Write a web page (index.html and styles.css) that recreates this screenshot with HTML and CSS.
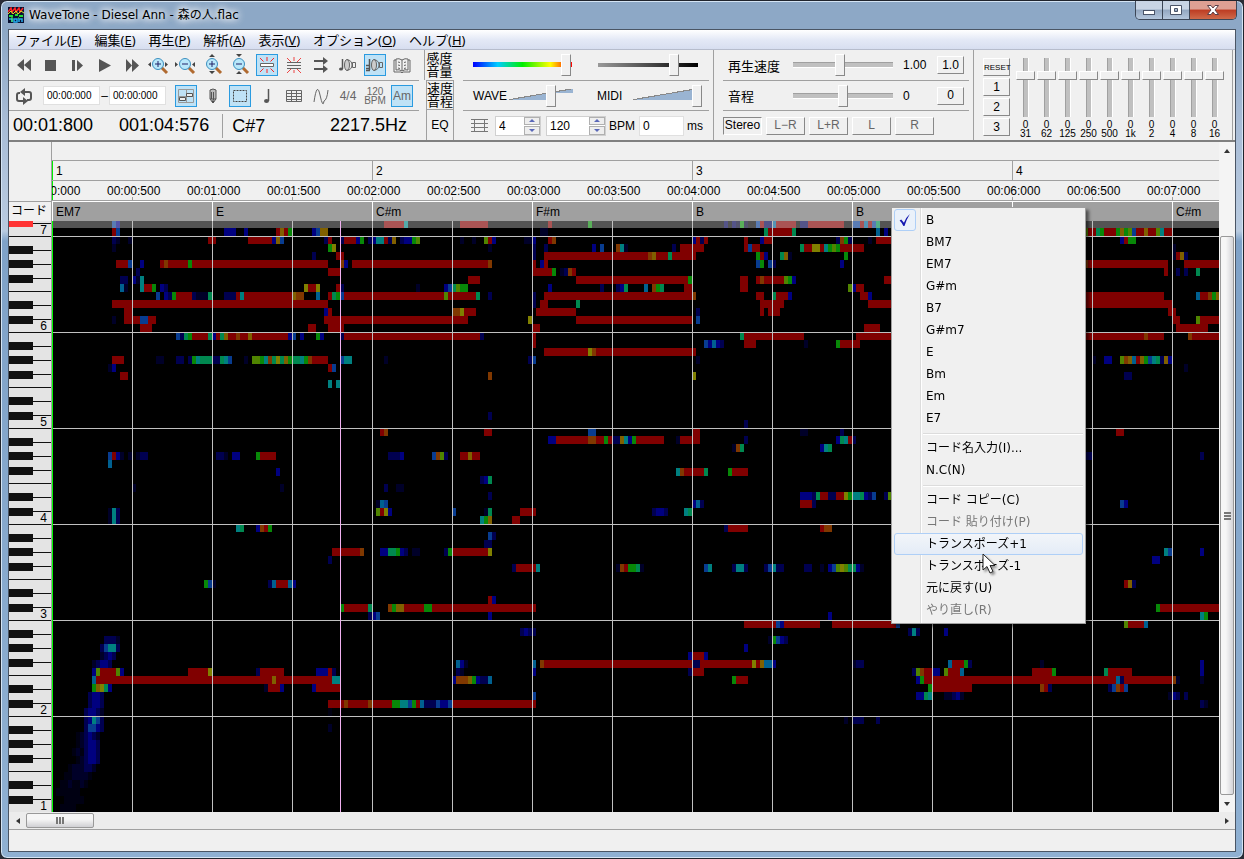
FILE: index.html
```html
<!DOCTYPE html>
<html lang="ja">
<head>
  <meta charset="UTF-8">
  <meta name="viewport" content="width=device-width, initial-scale=1.0">
  <title>WaveTone - Diesel Ann - 森の人.flac</title>
  <link rel="stylesheet" href="styles.css">
</head>
<body>

<div class="window">

  <!-- Title bar -->
  <header class="titlebar">
    <svg class="app-icon" width="16" height="16" viewBox="0 0 16 16">
      <rect width="16" height="16" fill="#081030"/>
      <path d="M0 5l3-4 1 4 3-4 1 4 3-4 1 4 3-4" stroke="#f22" fill="none" stroke-width="1.5"/>
      <path d="M0 7l3-3 2 3 3-3 2 3 3-3 3 2" stroke="#dd2" fill="none"/>
      <path d="M1 9h4M7 8h3M11 9h4" stroke="#2d3" stroke-width="2"/>
      <path d="M1 12h3v3M6 12h3v3H6zM11 15v-3h3v3" stroke="#2ae" fill="none" stroke-width="1.5"/>
      <path d="M4 10v5M10 11h1" stroke="#5f4"/>
    </svg>
    <h1>WaveTone - Diesel Ann - 森の人.flac</h1>
    <div class="caption-buttons">
      <button class="cap" aria-label="最小化"><svg width="14" height="12" viewBox="0 0 14 12"><rect x="1.500" y="6.500" width="11" height="4" fill="#fff" stroke="#4a5468"/></svg></button>
      <button class="cap" aria-label="最大化"><svg width="14" height="12" viewBox="0 0 14 12"><path d="M1.500 1.500h11v9h-11zM5.500 4.500v3h3v-3z" fill="#fff" fill-rule="evenodd" stroke="#4a5468"/></svg></button>
      <button class="cap close" aria-label="閉じる"><svg width="14" height="12" viewBox="0 0 14 12"><path d="M1.500 1.500h3.500l2 2.500 2-2.500h3.500L9 6l3.500 4.500H9L7 8l-2 2.500H1.500L5 6z" fill="#fff" stroke="#5a4048"/></svg></button>
    </div>
  </header>

  <div class="client">

    <nav class="menubar">
      <a href="#">ファイル(<u>F</u>)</a>
      <a href="#">編集(<u>E</u>)</a>
      <a href="#">再生(<u>P</u>)</a>
      <a href="#">解析(<u>A</u>)</a>
      <a href="#">表示(<u>V</u>)</a>
      <a href="#">オプション(<u>O</u>)</a>
      <a href="#">ヘルプ(<u>H</u>)</a>
    </nav>

    <!-- Toolbar -->
    <div class="toolbar">
      <div class="transport">
        <div class="row icons">
          <button class="tool" aria-label="先頭へ"><svg viewBox="0 0 22 22"><path d="M11 5v12L4 11zM18 5v12l-7-6z" fill="#555"/></svg></button>
          <button class="tool" aria-label="停止"><svg viewBox="0 0 22 22"><path d="M5 6h11v11H5z" fill="#555"/></svg></button>
          <button class="tool" aria-label="一時停止"><svg viewBox="0 0 22 22"><path d="M5 6h3v11H5zM10 6l6 5.500-6 5.500z" fill="#555"/></svg></button>
          <button class="tool" aria-label="再生"><svg viewBox="0 0 22 22"><path d="M5 5l12 6.500L5 18z" fill="#555"/></svg></button>
          <button class="tool" aria-label="末尾へ"><svg viewBox="0 0 22 22"><path d="M5 5l6 6.500L5 18zM11 5l7 6.500-7 6.500z" fill="#555"/></svg></button>
          <button class="tool" aria-label="横に拡大"><svg viewBox="0 0 22 22"><path d="M13 13l6 6" stroke="#b06a30" stroke-width="3"/><circle cx="10" cy="10" r="5.500" fill="#b8e8fa" stroke="#3b8fc0"/><path d="M7 10h6M10 7v6" stroke="#226"/><path d="M3 8v5L0 10.500zM17 8v5l3-2.500z" fill="#444"/></svg></button>
          <button class="tool" aria-label="横に縮小"><svg viewBox="0 0 22 22"><path d="M13 13l6 6" stroke="#b06a30" stroke-width="3"/><circle cx="10" cy="10" r="5.500" fill="#b8e8fa" stroke="#3b8fc0"/><path d="M7 10h6" stroke="#226"/><path d="M0 8v5l3-2.500zM20 8v5l-3-2.500z" fill="#444"/></svg></button>
          <button class="tool" aria-label="縦に拡大"><svg viewBox="0 0 22 22"><path d="M13 13l6 6" stroke="#b06a30" stroke-width="3"/><circle cx="10" cy="10" r="5.500" fill="#b8e8fa" stroke="#3b8fc0"/><path d="M7 10h6M10 7v6" stroke="#226"/><path d="M7 3h6L10 0zM7 17h6l-3 3z" fill="#444"/></svg></button>
          <button class="tool" aria-label="縦に縮小"><svg viewBox="0 0 22 22"><path d="M13 13l6 6" stroke="#b06a30" stroke-width="3"/><circle cx="10" cy="10" r="5.500" fill="#b8e8fa" stroke="#3b8fc0"/><path d="M7 10h6" stroke="#226"/><path d="M7 0h6l-3 3zM7 20h6l-3-3z" fill="#444"/></svg></button>
          <button class="tool on" aria-label="選択音を強調"><svg viewBox="0 0 22 22"><path d="M4.500 9.500h13v3h-13z" fill="#fff" stroke="#666"/><path d="M11 3v4M11 15v4M4 4l3.500 3.500M18 4l-3.500 3.500M4 18l3.500-3.500M18 18l-3.500-3.500" stroke="#f22"/></svg></button>
          <button class="tool" aria-label="音を強調"><svg viewBox="0 0 22 22"><path d="M4 8.500h14M4 11.500h14M4 14.500h14" stroke="#666"/><path d="M11 3v4M11 16v3M4 4l4 4M18 4l-4 4M4 19l4-4M18 19l-4-4" stroke="#e44"/></svg></button>
          <button class="tool" aria-label="自動スクロール"><svg viewBox="0 0 22 22"><path d="M4 6h9V3l5 4-5 4V8H4zM4 14h9v-3l5 4-5 4v-3H4z" fill="#555"/></svg></button>
          <button class="tool" aria-label="WAVE 出力"><svg viewBox="0 0 22 22"><path d="M5.500 5v10" stroke="#555" stroke-width="1.500"/><ellipse cx="4" cy="15" rx="2" ry="1.500" fill="#555"/><ellipse cx="10" cy="11" rx="2.500" ry="5.500" fill="#ccc" stroke="#666"/><path d="M10 5.500q5 1 5 5.500t-5 5.500M15.500 8.500h3v5h-3z" stroke="#666" fill="none"/></svg></button>
          <button class="tool on" aria-label="MIDI 出力"><svg viewBox="0 0 22 22"><path d="M5.500 5v11M2 11.500h4M2 14.500h4M2 16.500h4" stroke="#555" fill="none" stroke-width="1.500"/><ellipse cx="10" cy="11" rx="2.500" ry="5.500" fill="#ccc" stroke="#666"/><path d="M10 5.500q5 1 5 5.500t-5 5.500M15.500 8.500h3v5h-3z" stroke="#666" fill="none"/></svg></button>
          <button class="tool" aria-label="歌詞"><svg viewBox="0 0 22 22"><path d="M11 6q-3-2-6-1v11q3-1 6 1 3-2 6-1V5q-3-1-6 1v11M5 6H3v12h7l1 1 1-1h7V6h-2M7 8l2 .5M7 11l2 .5M13 8.500l2-.5M13 11.500l2-.5M7 14l2 .5M13 14.500l2-.5" stroke="#666" fill="none"/></svg></button>
        </div>
        <div class="row icons">
          <button class="tool" aria-label="リピート"><svg viewBox="0 0 22 22"><path d="M11 7h5q2 0 2 2v4q0 2-2 2h-2M11 16H6q-2 0-2-2v-4q0-2 2-2h1" stroke="#555" fill="none" stroke-width="2"/><path d="M12 3v8L7 7zM10 12v8l5-4z" fill="#555"/></svg></button>
          <div class="range-box">
            <input type="text" value="00:00:000" aria-label="開始位置"><span>–</span><input type="text" value="00:00:000" aria-label="終了位置">
          </div>
          <button class="tool on" aria-label="全体表示"><svg viewBox="0 0 22 22"><path d="M3.500 4.500h15v13h-15zM11.500 4v14M3 11.500h15" stroke="#999" fill="none"/><path d="M4.500 12.500h6v3h-6zM11.500 8.500h6v3h-6z" fill="#eee" stroke="#555"/></svg></button>
          <button class="tool" aria-label="ペン"><svg viewBox="0 0 22 22"><path d="M8 5q3-2 6 0v9l-3 4-3-4z" fill="#bbb" stroke="#555"/><path d="M9.500 7v7M11.500 7v8M8 14h6M10 16l1 2 1-2z" stroke="#555"/></svg></button>
          <button class="tool on" aria-label="範囲選択"><svg viewBox="0 0 22 22"><path d="M4.500 5.500h13v11h-13z" fill="none" stroke="#444" stroke-dasharray="2 1"/></svg></button>
          <button class="tool" aria-label="音符"><svg viewBox="0 0 22 22"><path d="M12.500 4v12" stroke="#555" stroke-width="1.500"/><ellipse cx="10.500" cy="16" rx="2.500" ry="2" fill="#555"/></svg></button>
          <button class="tool" aria-label="リスト"><svg viewBox="0 0 22 22"><path d="M3.500 5.500h15v11h-15zM3 8.500h15M3 11.500h15M3 14.500h15M8.500 6v11M13.500 6v11" stroke="#666" fill="none"/></svg></button>
          <button class="tool" aria-label="波形"><svg viewBox="0 0 22 22"><path d="M4 17Q7-4 10 10t4 6q3-1 4-11" stroke="#666" fill="none"/></svg></button>
          <button class="tool text">4/4</button>
          <button class="tool text two">120<br>BPM</button>
          <button class="tool text on">Am</button>
        </div>
        <div class="row readout">
          <span class="pos-time">00:01:800</span>
          <span class="pos-beat">001:04:576</span>
          <span class="pos-note">C#7</span>
          <span class="pos-freq">2217.5Hz</span>
        </div>
      </div>

      <div class="tabs">
        <button class="tab active">感度<br>音量</button>
        <button class="tab">速度<br>音程</button>
        <button class="tab small">EQ</button>
      </div>

      <div class="panel mix">
        <div class="row">
          <input type="range" class="slider sens" aria-label="感度" value="98">
          <input type="range" class="slider vol" aria-label="音量" value="79">
        </div>
        <div class="row">
          <label for="wave">WAVE</label><input type="range" class="slider wedge part" id="wave" value="63">
          <label for="midi">MIDI</label><input type="range" class="slider wedge" id="midi" value="100">
        </div>
        <div class="row tempo">
          <svg width="17" height="15" viewBox="0 0 17 15"><path d="M0 1.500h17M0 5.500h17M0 9.500h17M0 13.500h17M3.500 1v13M13.500 1v13" stroke="#777"/></svg>
          <div class="spin s4"><input type="text" value="4" aria-label="拍子"><div class="updown"><button aria-label="増"></button><button class="down" aria-label="減"></button></div></div>
          <div class="spin s120"><input type="text" id="bpm" value="120"><div class="updown"><button aria-label="増"></button><button class="down" aria-label="減"></button></div></div>
          <label for="bpm">BPM</label>
          <input type="text" class="offset" id="offset" value="0">
          <label for="offset">ms</label>
        </div>
      </div>

      <div class="panel speed">
        <div class="row">
          <label for="speed">再生速度</label><input type="range" class="slider" id="speed" value="47"><output>1.00</output><button class="btn">1.0</button>
        </div>
        <div class="row">
          <label for="pitch">音程</label><input type="range" class="slider" id="pitch" value="50"><output>0</output><button class="btn">0</button>
        </div>
        <div class="row channels">
          <button class="btn pressed">Stereo</button><button class="btn">L−R</button><button class="btn">L+R</button><button class="btn">L</button><button class="btn">R</button>
        </div>
      </div>

      <div class="panel eq">
        <div class="presets">
          <button class="btn reset">RESET</button>
          <button class="btn">1</button>
          <button class="btn">2</button>
          <button class="btn">3</button>
        </div>
        <div class="bands">
          <label><input type="range" value="75">0<br>31</label>
          <label><input type="range" value="75">0<br>62</label>
          <label><input type="range" value="75">0<br>125</label>
          <label><input type="range" value="75">0<br>250</label>
          <label><input type="range" value="75">0<br>500</label>
          <label><input type="range" value="75">0<br>1k</label>
          <label><input type="range" value="75">0<br>2</label>
          <label><input type="range" value="75">0<br>4</label>
          <label><input type="range" value="75">0<br>8</label>
          <label><input type="range" value="75">0<br>16</label>
        </div>
      </div>
    </div>

    <!-- Ruler, keyboard and spectrum -->
    <main class="workspace">
      <div class="corner"></div>
      <div class="ruler">
        <div class="markers"></div>
        <div class="measures"><span>1</span><span>2</span><span>3</span><span>4</span></div>
        <div class="times" id="times"></div>
      </div>
      <div class="chord-label">コード</div>
      <div class="chords">
        <span>EM7</span><span>E</span><span>C#m</span><span>F#m</span><span>B</span><span>B</span><span></span><span>C#m</span>
      </div>
      <div class="piano">
        <div class="octave first">7</div>
        <div class="octave">6</div>
        <div class="octave">5</div>
        <div class="octave">4</div>
        <div class="octave">3</div>
        <div class="octave">2</div>
        <div class="octave">1</div>
      </div>
      <div class="spectrum" id="spectrum"><canvas id="view"></canvas></div>
      <div class="vscroll">
        <button class="arrow up" aria-label="上へ"></button>
        <div class="vthumb"><i></i><i></i><i></i></div>
        <button class="arrow down" aria-label="下へ"></button>
      </div>
      <div class="hscroll">
        <button class="arrow left" aria-label="左へ"></button>
        <div class="hthumb"><i></i><i></i><i></i></div>
        <button class="arrow right" aria-label="右へ"></button>
      </div>
    </main>

    <footer class="statusbar"></footer>
  </div>

  <!-- Chord context menu -->
  <div class="popup" role="menu">
    <button class="item checked"><svg width="12" height="13" viewBox="0 0 12 13"><path d="M1 7l1.500-1L5 9Q7 4 10.500 1 7.500 6 5.500 12H4.500Q3 9 1 7z" fill="#1418b0"/></svg>B</button>
    <button class="item">BM7</button>
    <button class="item">EM7</button>
    <button class="item">G#m</button>
    <button class="item">B7</button>
    <button class="item">G#m7</button>
    <button class="item">E</button>
    <button class="item">Bm</button>
    <button class="item">Em</button>
    <button class="item">E7</button>
    <hr>
    <button class="item">コード名入力(I)...</button>
    <button class="item">N.C(N)</button>
    <hr>
    <button class="item">コード コピー(C)</button>
    <button class="item" disabled>コード 貼り付け(P)</button>
    <button class="item hover">トランスポーズ+1</button>
    <button class="item">トランスポーズ-1</button>
    <button class="item">元に戻す(U)</button>
    <button class="item" disabled>やり直し(R)</button>
  </div>

  <svg class="cursor" width="16" height="22" viewBox="0 0 16 22"><path d="M1 1v16l4-3.500 3 6.500 3-1.500-3-6h5z" fill="#fff" stroke="#222"/></svg>
</div>

<script src="app.js"></script>
</body>
</html>
```
FILE: styles.css
```css
* {
  margin: 0;
  padding: 0;
  box-sizing: border-box;
}
body {
  background-color: #2a2c36;
  font-family: "Liberation Sans", "Noto Sans CJK JP", sans-serif;
  font-size: 12px;
  color: #000;
}
button, input {
  font: inherit;
  color: inherit;
  border: 0;
  background: none;
}

/* Window frame */
.window {
  position: relative;
  height: 100vh;
  padding: 0 7px 6px;
  display: flex;
  flex-direction: column;
  background: linear-gradient(#8da8c6 0, #8da8c6 30px, #a8bcd6 120px, #b9cbe0 230px, #7fa2c8 240px, #8fb0d2);
  border: 1px solid #20242c;
  border-radius: 7px;
  box-shadow: inset 0 0 0 1px #d4e4f4;
}
.titlebar {
  flex: 0 0 28px;
  display: flex;
  align-items: center;
}
.app-icon {
  margin-right: 5px;
}
.titlebar h1 {
  flex: 1;
  font-family: "DejaVu Sans", "Noto Sans CJK JP", sans-serif;
  font-size: 12px;
  font-weight: normal;
  line-height: 28px;
  text-shadow: 0 0 6px #fff, 0 0 8px #fff, 0 0 10px #fff;
}
.caption-buttons {
  align-self: flex-start;
  display: flex;
  margin-right: -1px;
  border: 1px solid #3c4656;
  border-top: 0;
  border-radius: 0 0 5px 5px;
  overflow: hidden;
}
.cap {
  width: 27px;
  height: 18px;
  background: linear-gradient(#c8d4e4 45%, #93a7c0 50%, #b4c6dc);
  border-right: 1px solid #3c4656;
  display: flex;
  align-items: center;
  justify-content: center;
}
.cap.close {
  width: 46px;
  border: 0;
  background: linear-gradient(#dea093 45%, #bd3c22 50%, #cf6a4a);
}

.client {
  flex: 1;
  min-height: 0;
  display: flex;
  flex-direction: column;
  background: #f0f0f0;
  border: 1px solid #4a5564;
}

/* Menu bar */
.menubar {
  flex: 0 0 20px;
  display: flex;
  align-items: center;
  background: linear-gradient(#fff, #e4e9f6 50%, #d7def0);
  border-bottom: 1px solid #b6bccc;
  font-family: "Noto Sans", "Noto Sans CJK JP", sans-serif;
  font-size: 13px;
  line-height: 18px;
}
.menubar a {
  color: #000;
  text-decoration: none;
  padding: 0 7px 0 6px;
}

/* Toolbar */
.toolbar {
  flex: 0 0 92px;
  display: flex;
  border-bottom: 2px solid #808080;
  white-space: nowrap;
}
.row {
  height: 30px;
  display: flex;
  align-items: center;
  border-bottom: 1px solid #a0a0a0;
}
.row:first-child {
  height: 31px;
}
.row:last-child {
  height: 29px;
  border-bottom: 0;
}
.transport {
  flex: 0 0 410px;
}
.icons {
  gap: 5px;
  padding-left: 4px;
}
.tool {
  flex: 0 0 22px;
  width: 22px;
  height: 22px;
  display: flex;
  align-items: center;
  justify-content: center;
}
.tool svg {
  flex: 0 0 22px;
  width: 22px;
  height: 22px;
}
.tool.on {
  background: #bfe2f6;
  border: 1px solid #2a9be0;
}
.tool.text {
  color: #666;
}
.tool.two {
  font-size: 10px;
  line-height: 9px;
}
.range-box {
  width: 130px;
  display: flex;
  align-items: center;
  padding-left: 3px;
}
.range-box input {
  width: 57px;
  height: 19px;
  padding-left: 3px;
  font-size: 10px;
}
.range-box span {
  width: 9px;
  text-align: center;
}
input[type="text"] {
  background: #fff;
  border: 1px solid #e0e0e0;
}
.readout {
  font-size: 18px;
  padding: 0 12px 0 4px;
}
.pos-beat {
  margin-left: 26px;
}
.pos-note {
  margin-left: 13px;
  padding-left: 9px;
  line-height: 24px;
  border-left: 1px solid #a0a0a0;
}
.pos-freq {
  margin-left: auto;
}

.tabs {
  flex: 0 0 30px;
  margin-left: 5px;
}
.tab {
  display: block;
  width: 28px;
  height: 30px;
  margin-left: 2px;
  border: 1px solid #a0a0a0;
  font-size: 13px;
  line-height: 13px;
}
.tab.active {
  width: 30px;
  margin-left: 0;
  border-width: 0 0 0 1px;
}
.tab.small {
  font-size: 12px;
  border-width: 0 1px;
}

.panel {
  margin-right: 4px;
}
.mix {
  flex: 0 0 246px;
  margin-left: 9px;
}
.mix .row, .speed .row {
  padding-left: 10px;
}
.mix .vol {
  margin-left: 25px;
}
.mix label {
  width: 36px;
}
.mix .wedge + label {
  margin-left: 19px;
}

/* Sliders */
.slider {
  appearance: none;
  width: 100px;
  height: 22px;
  background: linear-gradient(#a0a0a0 1px, #c0c0c0 1px 5px, #fff 5px) 0 8px / 100% 6px no-repeat;
}
.slider::-webkit-slider-thumb {
  appearance: none;
  width: 10px;
  height: 22px;
  background: #f0f0f0;
  border: 1px solid #fff;
  border-right-color: #888;
  border-bottom-color: #888;
}
.sens {
  background-image: linear-gradient(90deg, #00f, #0cf 25%, #0e0 50%, #ff0 78%, #f60 90%, #f00);
  background-size: 99px 5px;
}
.vol {
  background-image: linear-gradient(90deg, #999, #000);
  background-size: 100px 4px;
  background-position: 0 9px;
}
.wedge {
  width: 69px;
  background: linear-gradient(to bottom right, transparent 46%, #888 46% 51%, #9ab4d2 51%) 0 4px / 64px 11px no-repeat;
}
.wedge.part {
  background: linear-gradient(#f0f0f0, #f0f0f0) 46px 8px / 18px 7px no-repeat, linear-gradient(to bottom right, transparent 46%, #888 46% 51%, #9ab4d2 51%) 0 4px / 64px 11px no-repeat;
}

.mix .tempo {
  padding-left: 8px;
}
.mix .tempo label {
  width: auto;
}
.tempo .spin {
  height: 20px;
  display: flex;
  background: #fff;
  border: 1px solid #d0d0d0;
}
.spin input[type="text"] {
  flex: 1;
  min-width: 0;
  padding-left: 3px;
  border: 0;
}
.s4 {
  width: 46px;
  margin: 0 5px 0 7px;
}
.s120 {
  width: 60px;
  margin-right: 3px;
}
.updown {
  width: 16px;
  display: grid;
  gap: 1px;
}
.updown button {
  border: 1px solid #b0b0b0;
  background: #eee;
  display: grid;
  place-items: center;
}
.updown button::after {
  content: "";
  border: 3px solid transparent;
  border-top: 0;
  border-bottom-color: #5a68b8;
}
.updown .down::after {
  transform: rotate(180deg);
}
.offset {
  width: 45px;
  height: 20px;
  padding-left: 3px;
  margin: 0 3px 0 4px;
}

.speed {
  flex: 0 0 260px;
  padding-left: 9px;
  border-left: 1px solid #a0a0a0;
  margin-right: 0;
}
.speed .row {
  width: 246px;
  padding-left: 5px;
}
.speed label {
  width: 65px;
  font-size: 13px;
}
.speed output {
  width: 34px;
  margin-left: 10px;
}
.btn {
  height: 18px;
  width: 27px;
  line-height: 15px;
  border: 1px solid #fff;
  border-right-color: #888;
  border-bottom-color: #888;
}
.speed .channels {
  padding-left: 0;
  gap: 4px;
}
.channels .btn {
  width: 39px;
  color: #666;
}
.channels .btn.pressed {
  color: #000;
  border-color: #888 #fff #fff #888;
}

.eq {
  flex: 1;
  display: flex;
  border: 1px solid #a0a0a0;
  border-width: 0 1px;
  margin-right: 2px;
  padding-left: 9px;
}
.presets {
  width: 28px;
  padding-top: 8px;
  display: flex;
  flex-direction: column;
  gap: 2px;
}
.presets .reset {
  font-size: 8px;
}
.bands {
  display: flex;
  padding: 8px 0 0 4px;
}
.bands label {
  width: 21px;
  font-size: 10px;
  line-height: 9px;
  text-align: center;
}
.bands input {
  appearance: none;
  display: block;
  writing-mode: vertical-lr;
  direction: rtl;
  width: 19px;
  height: 59px;
  margin: 0 auto 3px;
  background: linear-gradient(90deg, #a0a0a0 1px, #c0c0c0 1px 5px, #fff 5px) 7px 0 / 6px 100% no-repeat;
}
.bands input::-webkit-slider-thumb {
  appearance: none;
  width: 19px;
  height: 9px;
  background: #f0f0f0;
  border: 1px solid #fff;
  border-right-color: #888;
  border-bottom-color: #888;
}

/* Workspace */
.workspace {
  flex: 1;
  min-height: 0;
  display: grid;
  grid-template-columns: 43px minmax(0, 1fr) 16px;
  grid-template-rows: 59px 20px minmax(0, 1fr) 17px;
}
.corner, .chord-label, .piano {
  border-right: 1px solid #a0a0a0;
}
.ruler {
  overflow: hidden;
}
.markers {
  height: 19px;
  border-bottom: 1px solid #a0a0a0;
}
.measures, .times {
  height: 20px;
  display: flex;
  overflow: hidden;
  border-bottom: 1px solid #a0a0a0;
  box-shadow: inset 1px 0 #0e0;
  line-height: 21px;
}
.measures span {
  flex: 0 0 320px;
  padding-left: 4px;
}
.measures span + span {
  padding-left: 3px;
  border-left: 1px solid #a0a0a0;
}
.times {
  background: repeating-linear-gradient(90deg, #a0a0a0 0 1px, transparent 1px 80px) 0 100% / 100% 3px no-repeat;
}
.times span {
  flex: 0 0 80px;
}
.times span:first-child {
  margin-left: -25px;
}
.chord-label {
  border-top: 1px solid #a0a0a0;
  padding-left: 2px;
  line-height: 18px;
}
.chords {
  display: flex;
  overflow: hidden;
  background: #a0a0a0;
  border-top: 1px solid #fff;
  line-height: 20px;
}
.chords span {
  flex: 0 0 160px;
  padding-left: 3px;
  border-left: 1px solid #fff;
}
.piano {
  overflow: hidden;
}
/* one octave, B on top down to C */
.octave {
  height: 96px;
  padding: 85px 4px 0 0;
  line-height: 11px;
  text-align: right;
  background:
    linear-gradient(#111 0 0) 0 10px / 24px 8px no-repeat,
    linear-gradient(#111 0 0) 0 24px / 24px 8px no-repeat,
    linear-gradient(#111 0 0) 0 39px / 24px 8px no-repeat,
    linear-gradient(#111 0 0) 0 65px / 24px 8px no-repeat,
    linear-gradient(#111 0 0) 0 80px / 24px 8px no-repeat,
    linear-gradient(#111 1px, transparent 1px 14px, #111 14px 15px, transparent 15px 28px, #111 28px 29px, transparent 29px 42px, #111 42px 43px, transparent 43px 55px, #111 55px 56px, transparent 56px 69px, #111 69px 70px, transparent 70px 83px, #111 83px 84px, transparent 84px),
    #e4e4e4;
}
.octave.first {
  margin-top: -81px;
  background:
    linear-gradient(#f33 0 0) 0 80px / 24px 7px no-repeat,
    linear-gradient(transparent 83px, #111 83px 84px, transparent 84px),
    #e4e4e4;
}
.spectrum {
  overflow: hidden;
  background: #000;
}
.spectrum canvas {
  display: block;
}

/* Scroll bars */
.vscroll {
  grid-column: 3;
  grid-row: 1 / 4;
  display: flex;
  flex-direction: column;
  background: #f4f4f4;
}
.hscroll {
  grid-column: 1 / 4;
  display: flex;
  background: #ececec;
}
.arrow {
  flex: 0 0 17px;
  display: grid;
  place-items: center;
}
.arrow::after {
  content: "";
  border: 3px solid transparent;
  border-top: 0;
  border-bottom: 4px solid #333;
}
.arrow.down::after {
  transform: rotate(180deg);
}
.arrow.left::after {
  transform: rotate(-90deg);
}
.arrow.right::after {
  transform: rotate(90deg);
}
.vthumb, .hthumb {
  display: flex;
  align-items: center;
  justify-content: center;
  gap: 1px;
  border: 1px solid #999;
  border-radius: 2px;
}
.vthumb {
  flex: 1;
  flex-direction: column;
  margin: 77px 1px 0;
  background: linear-gradient(90deg, #f6f6f6 40%, #d4d4d8);
}
.hthumb {
  width: 68px;
  margin: 1px auto 1px 0;
  background: linear-gradient(#f6f6f6 40%, #d0d0d4);
}
.vthumb i {
  width: 7px;
  height: 2px;
  background: #777;
}
.hthumb i {
  width: 2px;
  height: 7px;
  background: #777;
}
.statusbar {
  flex: 0 0 22px;
  border-top: 1px solid #a0a0a0;
}

/* Context menu */
.popup {
  position: absolute;
  left: 890px;
  top: 206px;
  width: 195px;
  padding: 1px 2px 2px;
  border: 1px solid #a0a0a0;
  background: linear-gradient(90deg, transparent 28px, #dcdcdc 28px 29px, #fff 29px 30px, transparent 30px) #f0f0f0;
  box-shadow: 3px 3px 3px rgba(0, 0, 0, 0.5);
  font-family: "DejaVu Sans", "Noto Sans CJK JP", sans-serif;
}
.item {
  display: flex;
  align-items: center;
  width: 100%;
  height: 22px;
  line-height: 20px;
  padding-left: 31px;
  border: 1px solid transparent;
  border-radius: 3px;
  white-space: nowrap;
}
.item:disabled {
  color: #777;
}
.item.hover {
  border-color: #aecff7;
  background: linear-gradient(#f2f5f9, #e4ecf7);
}
.item.checked {
  padding-left: 0;
}
.item.checked svg {
  width: 22px;
  height: 22px;
  padding: 3px;
  margin: -1px 10px -1px -1px;
  border: 1px solid #aecff7;
  border-radius: 3px;
  background: #eaf1fa;
}
.popup hr {
  height: 2px;
  margin: 4px 0 2px 29px;
  border: 0;
  border-top: 1px solid #dcdcdc;
  border-bottom: 1px solid #fff;
}
.cursor {
  position: absolute;
  left: 981px;
  top: 552px;
  filter: drop-shadow(2px 2px 1px rgba(0, 0, 0, 0.4));
}
```
FILE: app.js
```js
// Level colours, from the quietest to the loudest
const LEVELS = {
  x: '#000012', d: '#000028', n: '#000050', b: '#000080', s: '#083c90', c: '#006090',
  t: '#008080', e: '#008850', g: '#088808', l: '#508400', y: '#808000', m: '#806000',
  o: '#803800', r: '#800000'
};
const CELL_W = 4;
const CELL_H = 8;

// Semitone row -> runs written as "column:level[count]..."
const SPECTRUM = {
  0: '15:sb 83:r5t 102:r7 124:r 134:g 168:n 170:ndgd 176:srn2cr5 187:n2r9 200:s2rcrse',
  1: '15:rs 43:b3 48:b 56:rmrg 65:bsm2 122:d2 178:er6e 206:c 208:b 258:lr2egr3gmglsr2mr2ltr2',
  2: '15:nd 19:d 39:r2 49:r6bms 68:nr 72:nr3bg 79:nbt2rnm 87:nb2gl 102:d 105:d 108:lrb 118:d2b 124:ro 160:brnr 173:r 177:br2 196:nogn 204:d 206:r4 267:brg2',
  3: '15:d 69:gy 109:d 120:n 123:n 135:b 137:s 141:otd 155:n 157:r6 173:rsr2 187:er2y2rtglgr6 280:d',
  4: '65:n 71:r2 120:n 123:r26omr3er6 176:grb 182:emd 198:g 280:drmn',
  5: '16:r3s 22:b 27:ror5gr34 72:ob 75:r34o 120:r 122:br 176:sg 179:sn 197:b 258:or20 283:r9',
  6: '21:n 69:r3 120:r5g 127:dnor 278:r 281:n 283:n 286:e',
  7: '17:n2 20:bdt 104:r3 131:r28g 172:r2 176:ror5lgb 208:r2',
  8: '17:cd 22:tr2g 27:bn 63:yr2y 71:rn 91:d 98:bselg2 124:b 137:n 141:nbe 148:c 150:oge 158:r2 172:r2 199:lbr2',
  9: '26:s 28:bngr4nd3e 43:n3rtr12mo2 66:c 69:regsr25lr7e 109:n 120:n 123:r37o 176:r2 180:er3b 202:r2b 258:r20 286:cr2ogm',
  10: '15:r54 120:n 122:r2 131:e 177:r6 204:r6 258:r22',
  11: '18:r2 68:br 100:o2yr3 121:r10 161:n 177:r 179:r3 279:r2',
  12: '15:d 18:r4s2r2 68:r36 119:y 131:r29 161:s 280:r2 286:lr5',
  13: '22:r3 64:r2 69:r4 120:r2 203:r4 281:r8',
  14: '31:snegr4ebremr2or2mr9bs 62:b 66:gb 72:nr34n 120:r 172:er15 201:r9 258:r15or4 284:or7',
  15: '120:r 163:sbcbn 173:r3 188:d 196:gr5',
  16: '123:r11yor25',
  17: '15:r3 26:d2 31:n2 34:ngte3n2ets 48:d 50:l2gtoeyemge2tgor4 72:st2 83:d 119:ns 161:d 260:d 263:b2 267:lomcrmgstenmb',
  18: '14:db 69:rs 283:d',
  19: '17:r2 109:o 160:y 268:n2',
  20: '69:t 71:t',
  24: '109:n',
  25: '173:n',
  26: '82:ro 108:r2 134:s2 160:r2 187:d2 197:n 266:r2',
  27: '124:b2r8o2r2grn2mtbgr7 156:dr5 173:n 196:betrn',
  28: '170:doe 192:bte',
  29: '14:srbd 19:d 21:dn2 41:n2d 45:b2 51:gr4 84:n3b 95:soln 102:r2mr2 258:n2 287:n',
  30: '14:c',
  31: '56:b 156:tor5e 169:gr4',
  32: '107:nbe',
  33: '20:d 57:d 83:n 86:d2',
  34: '109:n 187:b3ner2n2r2ygt2ebns 208:nl',
  35: '81:dcs 160:bcn 187:r3n 267:sb',
  36: '14:dtn 81:lryb 100:s 108:de 117:r4 150:nb2n 158:te',
  37: '14:dtn 107:tgm 115:r2',
  38: '46:te 51:borg 168:nr5 192:ro2',
  39: '109:sn',
  40: '108:n2',
  41: '70:r7o 82:b2e2gbn 90:d2 98:ngr9y 278:ts 287:b',
  42: '69:n 275:b2',
  43: '115:nr5t 141:dorg2ed 163:st 170:nt2n 178:nstn2 188:n2 192:d 194:bslyle2bd',
  45: '38:gsd 54:ncr3cb 268:rmn',
  47: '109:rb',
  48: '72:gr6e 84:ogm2r5g2r26 276:gr15',
  49: '79:nbs 109:b 194:b 287:tg',
  50: '173:r8sbr9 195:r16s 268:lr4c',
  51: '117:nbn2 214:ntn 223:b',
  52: '13:nn2d 179:dgsbn',
  53: '12:nst2n 173:b',
  54: '12:dnbn 159:br3b',
  55: '10:dnb2n 101:cbd 120:c 122:or37n2r13yrmc2b 200:dn2 224:cr3gn 247:d 287:b',
  56: '10:blr4lb 34:r5y 51:nr6 66:b3rn 101:nd 120:b 159:nr3 215:nlor2b2 223:lr3c 245:r5g 263:er6 287:b',
  57: '10:cr44mr14t2 100:bo3mgbn2c 170:gr3 216:bgr48cnr12od 287:d',
  58: '10:gmyeb 53:dr3b 65:br6 219:gr10 247:orn 264:nsors',
  59: '9:nb2n 120:s 216:b2et 223:d2nbd 279:dbn 283:n',
  60: '9:nbbn 69:r4or5or5g2t2sgrcn3sb2sr21 287:nd',
  61: '8:nbbnd 69:x',
  62: '8:nbtsn 198:d 200:n3 206:n',
  63: '8:ns2bn 69:d',
  64: '6:xdnbnd',
  65: '6:xdnb2n',
  66: '5:xdxnb2n',
  67: '6:xdnb2n',
  68: '4:xdddn2d',
  69: '3:x2ddddx',
  70: '2:x2dx2dx',
  71: '1:x2x2x2',
  72: '3:x5',
  73: '2:x4'
};

const OCTAVE_LINE = 15;   // y of the first B/C line
const PLAY_X = 288;

function draw() {
  const box = document.getElementById('spectrum');
  const canvas = document.getElementById('view');
  canvas.width = box.clientWidth;
  canvas.height = box.clientHeight;
  const ctx = canvas.getContext('2d');
  ctx.fillStyle = '#000';
  ctx.fillRect(0, 0, canvas.width, canvas.height);

  for (const [row, text] of Object.entries(SPECTRUM)) {
    for (const run of text.split(' ')) {
      const [start, body] = run.split(':');
      let col = Number(start);
      for (const [, level, count] of body.matchAll(/([a-z])(\d*)/g)) {
        const n = Number(count || 1);
        ctx.fillStyle = LEVELS[level];
        ctx.fillRect(col * CELL_W, row * CELL_H - 1, n * CELL_W, CELL_H);
        col += n;
      }
    }
  }

  // Selected semitone
  ctx.fillStyle = 'rgba(255, 255, 255, 0.33)';
  ctx.fillRect(0, 0, canvas.width, 7);

  // Grid
  ctx.fillStyle = '#c0c0c0';
  for (let x = 80; x < canvas.width; x += 80) ctx.fillRect(x, 0, 1, canvas.height);
  for (let y = OCTAVE_LINE; y < canvas.height; y += 96) ctx.fillRect(0, y, canvas.width, 1);

  // Start marker and play position
  ctx.fillStyle = '#0f0';
  ctx.fillRect(0, 0, 1, canvas.height);
  ctx.fillStyle = '#f0b0f0';
  ctx.fillRect(PLAY_X, 0, 1, canvas.height);
}

function buildTimes() {
  const times = document.getElementById('times');
  for (let half = 0; half <= 14; half++) {
    const label = document.createElement('span');
    label.textContent = '00:0' + Math.floor(half / 2) + (half % 2 ? ':500' : ':000');
    times.appendChild(label);
  }
}

buildTimes();
draw();
window.addEventListener('resize', draw);
```
